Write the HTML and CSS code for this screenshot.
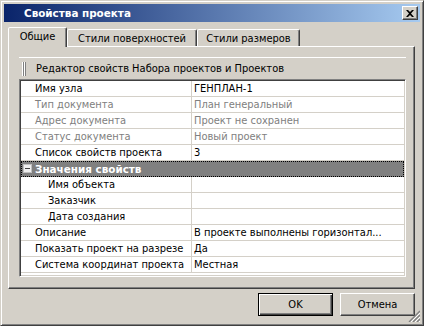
FILE: index.html
```html
<!DOCTYPE html>
<html lang="ru">
<head>
<meta charset="utf-8">
<title>Свойства проекта</title>
<link rel="stylesheet" href="styles.css">
</head>
<body>
<div class="window">
  <div class="titlebar">
    <span class="title">Свойства проекта</span>
    <button class="close" aria-label="Закрыть">
      <svg width="8" height="7" viewBox="0 0 8 7"><path d="M0 0H2L4 2L6 0H8L5 3.5L8 7H6L4 5L2 7H0L3 3.5Z" fill="#000"/></svg>
    </button>
  </div>
  <div class="tabs">
    <div class="tab tab-general active">Общие</div>
    <div class="tab tab-surf">Стили поверхностей</div>
    <div class="tab tab-dim">Стили размеров</div>
  </div>
  <div class="panel">
    <div class="editor-head"><span class="grip"></span><span class="head-text">Редактор свойств Набора проектов и Проектов</span></div>
    <div class="grid">
      <div class="row"><div class="name">Имя узла</div><div class="value">ГЕНПЛАН-1</div></div>
      <div class="row ro"><div class="name">Тип документа</div><div class="value">План генеральный</div></div>
      <div class="row ro"><div class="name">Адрес документа</div><div class="value">Проект не сохранен</div></div>
      <div class="row ro"><div class="name">Статус документа</div><div class="value">Новый проект</div></div>
      <div class="row"><div class="name">Список свойств проекта</div><div class="value">3</div></div>
      <div class="row group"><span class="toggle"><span class="minus"></span></span><span class="group-text">Значения свойств</span></div>
      <div class="row sub"><div class="name">Имя объекта</div><div class="value"></div></div>
      <div class="row sub"><div class="name">Заказчик</div><div class="value"></div></div>
      <div class="row sub"><div class="name">Дата создания</div><div class="value"></div></div>
      <div class="row"><div class="name">Описание</div><div class="value">В проекте выполнены горизонтал...</div></div>
      <div class="row"><div class="name">Показать проект на разрезе</div><div class="value">Да</div></div>
      <div class="row"><div class="name">Система координат проекта</div><div class="value">Местная</div></div>
    </div>
  </div>
  <div class="buttons">
    <button class="btn default">OK</button>
    <button class="btn">Отмена</button>
  </div>
  <svg class="sizegrip" width="12" height="12" viewBox="0 0 12 12">
    <path d="M12 1L1 12M12 5L5 12M12 9L9 12" stroke="#808080" stroke-width="1.4"/>
    <path d="M12 3L3 12M12 7L7 12M12 11L11 12" stroke="#ffffff" stroke-width="1"/>
  </svg>
</div>
</body>
</html>
```
FILE: styles.css
```css
* { box-sizing: border-box; }
body {
  margin: 0;
  font-family: "DejaVu Sans Condensed", "DejaVu Sans", sans-serif;
  font-size: 11px;
  color: #000;
}
.window {
  position: relative;
  width: 424px;
  height: 326px;
  background: #d4d0c8;
  border: 1px solid;
  border-color: #d4d0c8 #404040 #404040 #d4d0c8;
  box-shadow: inset 1px 1px #fff, inset -1px -1px #808080;
  padding: 3px;
  display: flex;
  flex-direction: column;
}
.titlebar {
  height: 18px;
  flex: none;
  background: linear-gradient(to right, #0a246a, #a6caf0);
  display: flex;
  align-items: center;
  padding: 0 2px 0 20px;
  color: #fff;
  font-family: "DejaVu Sans", sans-serif;
  font-size: 10.4px;
  font-weight: bold;
}
.title { flex: 1; }
.close {
  width: 16px;
  height: 14px;
  padding: 0;
  background: #d4d0c8;
  border: 1px solid;
  border-color: #fff #404040 #404040 #fff;
  box-shadow: inset -1px -1px #808080;
  display: flex;
  align-items: center;
  justify-content: center;
}
.tabs {
  flex: none;
  display: flex;
  align-items: flex-end;
  height: 19px;
  margin: 5px 0 0 4px;
  position: relative;
  z-index: 1;
}
.tab {
  height: 17px;
  border: 1px solid;
  border-bottom: none;
  border-color: #fff #404040 transparent #fff;
  border-radius: 2px 2px 0 0;
  box-shadow: inset -1px 0 #808080;
  display: flex;
  align-items: center;
  justify-content: center;
  padding-top: 1px;
  background: #d4d0c8;
}
.tab.active {
  height: 20px;
  margin-bottom: -1px;
  padding-top: 0;
  padding-bottom: 2px;
}
.tab-general { width: 59px; }
.tab-surf { width: 130px; }
.tab-dim { width: 103px; }
.panel {
  flex: none;
  height: 243px;
  margin: 0 5px 0 4px;
  border: 1px solid;
  border-color: #fff #404040 #404040 #fff;
  box-shadow: inset -1px -1px #808080;
  padding: 10px 8px 11px 10px;
  display: flex;
  flex-direction: column;
}
.editor-head {
  flex: none;
  height: 22px;
  border-top: 1px solid #fff;
  display: flex;
  align-items: center;
  padding-left: 3px;
}
.grip {
  width: 4px;
  height: 14px;
  background: linear-gradient(to right, #fff 0 1px, #808080 1px 2px, #fff 2px 3px, #808080 3px 4px);
  margin-right: 10px;
}
.grid {
  flex: none;
  height: 198px;
  background: #fff;
  border: 1px solid;
  border-color: #808080 #fff #fff #808080;
  box-shadow: inset 1px 1px #404040, inset -1px -1px #d4d0c8;
  padding: 1px;
}
.row {
  height: 16px;
  display: flex;
  border-bottom: 1px solid #d4d0c8;
  white-space: nowrap;
}
.name {
  width: 171px;
  flex: none;
  border-right: 1px solid #d4d0c8;
  padding-left: 14px;
  display: flex;
  align-items: center;
}
.value {
  flex: 1;
  padding-left: 2px;
  display: flex;
  align-items: center;
  overflow: hidden;
}
.ro { color: #808080; }
.sub .name { padding-left: 27px; }
.group {
  background: #808080;
  color: #fff;
  font-family: "DejaVu Sans", sans-serif;
  font-size: 10.4px;
  font-weight: bold;
  align-items: center;
  outline: 1px dotted #000;
  outline-offset: -1px;
  border-bottom-color: #808080;
}
.toggle {
  width: 9px;
  height: 9px;
  margin-left: 2px;
  margin-right: 3px;
  background: #f0f0f0;
  border: 1px solid #c0c0c0;
  display: flex;
  align-items: center;
  justify-content: center;
}
.minus {
  width: 5px;
  height: 1px;
  background: #404040;
}
.buttons {
  flex: none;
  display: flex;
  justify-content: flex-end;
  gap: 7px;
  margin: 4px 5px 0 0;
}
.btn {
  width: 75px;
  height: 23px;
  padding: 0;
  font: inherit;
  color: #000;
  background: #d4d0c8;
  border: 1px solid;
  border-color: #fff #404040 #404040 #fff;
  box-shadow: inset -1px -1px #808080;
}
.btn.default {
  border-color: #000;
  box-shadow: inset 1px 1px #fff, inset -1px -1px #404040, inset -2px -2px #808080;
}
.sizegrip {
  position: absolute;
  right: 3px;
  bottom: 3px;
}
```
